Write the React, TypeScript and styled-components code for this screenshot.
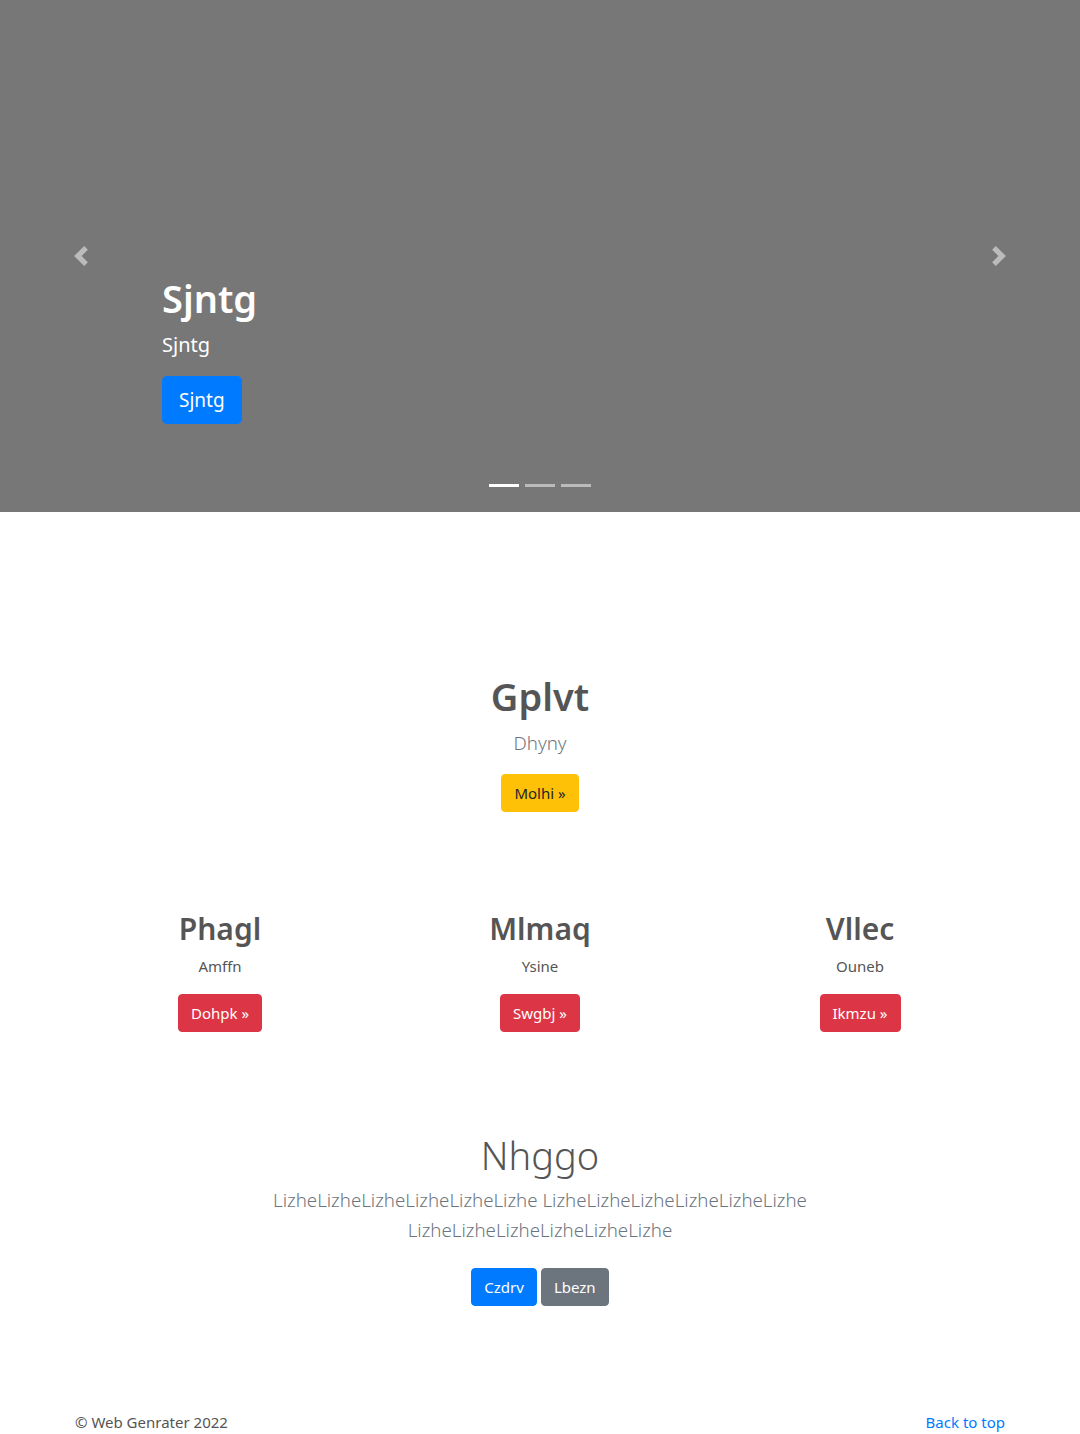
import React from "react";
import styled, { createGlobalStyle } from "styled-components";

const Blue = "#007bff";
const Gray = "#6c757d";
const Danger = "#dc3545";
const Warning = "#ffc107";
const Text = "#555";

const GlobalStyle = createGlobalStyle`
  body {
    margin: 0;
    font-family: "Noto Sans", "Open Sans", sans-serif;
    font-size: 16px;
    line-height: 1.5;
    color: ${Text};
    background: #fff;
  }
  * { box-sizing: border-box; }
`;

const Carousel = styled.section`
  position: relative;
  height: 512px;
  background: #777;
  overflow: hidden;
`;

const Caption = styled.div`
  position: absolute;
  left: 15%;
  right: 15%;
  bottom: 88px;
  color: #fff;
  text-align: left;
`;

const HeroTitle = styled.h1`
  margin: 0 0 8px;
  font-size: 38px;
  font-weight: 600;
  line-height: 48px;
`;

const HeroLead = styled.p`
  margin: 0 0 16px;
  font-size: 20px;
  line-height: 30px;
`;

const Control = styled.a<{ $side: "left" | "right" }>`
  position: absolute;
  top: 0;
  bottom: 0;
  ${(p) => p.$side}: 0;
  width: 15%;
  display: flex;
  align-items: center;
  justify-content: center;
  opacity: 0.5;
  svg {
    width: 20px;
    height: 20px;
    fill: #fff;
  }
`;

const Indicators = styled.ol`
  position: absolute;
  left: 0;
  right: 0;
  bottom: 25px;
  margin: 0;
  padding: 0;
  list-style: none;
  display: flex;
  justify-content: center;
  gap: 6px;
`;

const Indicator = styled.li<{ $active?: boolean }>`
  width: 30px;
  height: 3px;
  background: #fff;
  opacity: ${(p) => (p.$active ? 1 : 0.5)};
`;

const Button = styled.a<{ $bg: string; $fg?: string; $lg?: boolean }>`
  display: inline-block;
  padding: ${(p) => (p.$lg ? "8px 16px" : "6px 12px")};
  font-size: ${(p) => (p.$lg ? "19px" : "15px")};
  line-height: ${(p) => (p.$lg ? "30px" : "24px")};
  border: 1px solid ${(p) => p.$bg};
  border-radius: ${(p) => (p.$lg ? "4.8px" : "4px")};
  background: ${(p) => p.$bg};
  color: ${(p) => p.$fg || "#fff"};
  text-decoration: none;
  cursor: pointer;
`;

const Container = styled.div`
  width: 960px;
  margin: 0 auto;
  padding: 0 15px;
`;

const Feature = styled.section`
  padding-top: 160px;
  text-align: center;
`;

const BigTitle = styled.h2<{ $light?: boolean }>`
  margin: 0 0 ${(p) => (p.$light ? "6px" : "8px")};
  font-size: 38px;
  font-weight: ${(p) => (p.$light ? 300 : 600)};
  line-height: 48px;
  color: ${Text};
`;

const Lead = styled.p`
  margin: 0 auto 16px;
  font-size: 18.7px;
  font-weight: 300;
  line-height: 30px;
  color: ${Gray};
`;

const Columns = styled.div`
  display: grid;
  grid-template-columns: repeat(3, 1fr);
  margin: 98px -15px 0;
`;

const Column = styled.div`
  padding: 0 15px;
  text-align: center;
`;

const ColTitle = styled.h3`
  margin: 0 0 6px;
  font-size: 30px;
  font-weight: 600;
  line-height: 38px;
  color: ${Text};
`;

const ColText = styled.p`
  margin: 0 0 16px;
  font-size: 15px;
  line-height: 24px;
  color: ${Text};
`;

const Jumbo = styled.section`
  margin-top: 99px;
  text-align: center;
`;

const JumboLead = styled(Lead)`
  max-width: 610px;
  margin-bottom: 23px;
`;

const ButtonRow = styled.div`
  display: flex;
  justify-content: center;
  gap: 4px;
`;

const Footer = styled.footer`
  margin-top: 104px;
  display: flex;
  justify-content: space-between;
  font-size: 15px;
  line-height: 24px;
  color: ${Text};
  a {
    color: ${Blue};
    text-decoration: none;
  }
`;

const PrevIcon = () => (
  <svg viewBox="0 0 8 8">
    <path d="M5.25 0l-4 4 4 4 1.5-1.5L4.25 4l2.5-2.5L5.25 0z" />
  </svg>
);

const NextIcon = () => (
  <svg viewBox="0 0 8 8">
    <path d="M2.75 0l-1.5 1.5L3.75 4l-2.5 2.5L2.75 8l4-4-4-4z" />
  </svg>
);

const columns = [
  { title: "Phagl", text: "Amffn", button: "Dohpk" },
  { title: "Mlmaq", text: "Ysine", button: "Swgbj" },
  { title: "Vllec", text: "Ouneb", button: "Ikmzu" },
];

export default function App() {
  return (
    <>
      <GlobalStyle />
      <Carousel>
        <Indicators>
          <Indicator $active />
          <Indicator />
          <Indicator />
        </Indicators>
        <Caption>
          <HeroTitle>Sjntg</HeroTitle>
          <HeroLead>Sjntg</HeroLead>
          <Button $bg={Blue} $lg>
            Sjntg
          </Button>
        </Caption>
        <Control $side="left">
          <PrevIcon />
        </Control>
        <Control $side="right">
          <NextIcon />
        </Control>
      </Carousel>

      <Container>
        <Feature>
          <BigTitle>Gplvt</BigTitle>
          <Lead>Dhyny</Lead>
          <Button $bg={Warning} $fg="#212529">
            Molhi »
          </Button>
        </Feature>

        <Columns>
          {columns.map((c) => (
            <Column key={c.title}>
              <ColTitle>{c.title}</ColTitle>
              <ColText>{c.text}</ColText>
              <Button $bg={Danger}>{c.button} »</Button>
            </Column>
          ))}
        </Columns>

        <Jumbo>
          <BigTitle $light>Nhggo</BigTitle>
          <JumboLead>
            LizheLizheLizheLizheLizheLizhe LizheLizheLizheLizheLizheLizhe
            LizheLizheLizheLizheLizheLizhe
          </JumboLead>
          <ButtonRow>
            <Button $bg={Blue}>Czdrv</Button>
            <Button $bg={Gray}>Lbezn</Button>
          </ButtonRow>
        </Jumbo>

        <Footer>
          <span>© Web Genrater 2022</span>
          <a href="#">Back to top</a>
        </Footer>
      </Container>
    </>
  );
}
